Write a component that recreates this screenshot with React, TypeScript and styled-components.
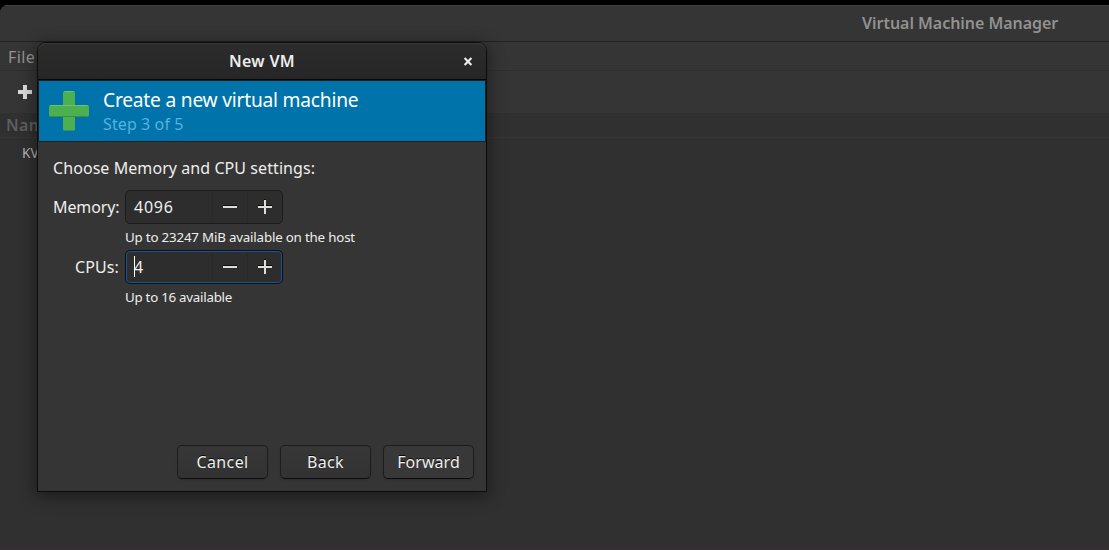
import React from "react";
import styled, { createGlobalStyle } from "styled-components";

const GlobalStyle = createGlobalStyle`
  * { box-sizing: border-box; }
  body {
    margin: 0;
    background: #000;
    overflow: hidden;
    font-family: "Noto Sans", "Open Sans", sans-serif;
    font-size: 16px;
    color: #eeeeec;
  }
`;

const Desktop = styled.div`
  position: relative;
  width: 1109px;
  height: 550px;
  padding-top: 5px;
  background: #000;
  overflow: hidden;
`;

const ManagerWindow = styled.div`
  display: flex;
  flex-direction: column;
  height: 545px;
  background: #303030;
  border-radius: 8px 0 0 0;
  border-bottom: 1px solid #372d32;
  overflow: hidden;
  color: #919190;
`;

const ManagerTitle = styled.div`
  height: 37px;
  padding-left: 862px;
  line-height: 36px;
  font-weight: 600;
  background: #353535;
  border-bottom: 1px solid #222;
  box-shadow: inset 0 1px #404040;
`;

const MenuBar = styled.div`
  height: 29px;
  padding-left: 8px;
  line-height: 31px;
  background: #353535;
  border-bottom: 1px solid #2f2f2f;
`;

const Toolbar = styled.div`
  height: 42px;
  padding: 14px 0 0 18px;
  background: #353535;
  svg { display: block; }
`;

const ListHeader = styled.div`
  height: 25px;
  padding-left: 6px;
  line-height: 24px;
  font-weight: 600;
  color: #5e5e5e;
  border-bottom: 1px solid #353535;
`;

const ListRow = styled.div`
  padding-left: 22px;
  line-height: 30px;
  font-size: 13.6px;
  color: #b4b4b3;
`;

const Dialog = styled.div`
  position: absolute;
  left: 37px;
  top: 42px;
  width: 450px;
  height: 450px;
  display: flex;
  flex-direction: column;
  background: #353535;
  border: 1px solid #0c0c0c;
  border-radius: 9px 9px 0 0;
  box-shadow: 0 3px 16px 2px rgba(0, 0, 0, 0.4);
`;

const DialogTitle = styled.div`
  display: grid;
  grid-template-columns: 36px 1fr 36px;
  align-items: center;
  height: 37px;
  font-weight: 600;
  text-align: center;
  background: linear-gradient(#2c2c2c, #262626);
  border-bottom: 1px solid #070707;
  border-radius: 8px 8px 0 0;
  box-shadow: inset 0 1px #383838;
  svg { display: block; margin-left: 13px; }
`;

const Banner = styled.div`
  display: flex;
  height: 62px;
  padding: 10px 0 0 10px;
  background: #0073aa;
  border: 1px solid #1f1f1f;
  svg { display: block; margin-right: 14px; }
`;

const BannerText = styled.div`
  margin-top: -4px;
`;

const Heading = styled.div`
  font-size: 19.2px;
  line-height: 25px;
  color: #fff;
`;

const Step = styled.div`
  line-height: 25px;
  color: #58b0e3;
`;

const Form = styled.div`
  display: flex;
  flex-direction: column;
  flex: 1;
  padding: 15px 12px 12px 15px;
`;

const Text = styled.span<{ $spacing?: number }>`
  letter-spacing: ${(p) => p.$spacing ?? 0}px;
  white-space: pre;
`;

const Prompt = styled.div`
  height: 33px;
  line-height: 22px;
`;

const Fields = styled.div`
  display: grid;
  grid-template-columns: 66px 1fr;
  grid-template-rows: 34px 26px 34px 26px;
  column-gap: 6px;
`;

const Label = styled.div`
  text-align: right;
  line-height: 34px;
  white-space: nowrap;
`;

const Hint = styled.div`
  grid-column: 2;
  font-size: 13.33px;
  line-height: 26px;
`;

const Spin = styled.div<{ $focused?: boolean }>`
  display: grid;
  grid-template-columns: 1fr 35px 35px;
  width: 158px;
  height: 34px;
  background: #2d2d2d;
  border: 1px solid ${(p) => (p.$focused ? "#0b0f17" : "#1c1c1c")};
  border-radius: 5px;
  box-shadow: ${(p) => (p.$focused ? "inset 0 0 0 1px #15539e" : "none")};
`;

const Value = styled.div`
  position: relative;
  padding-left: 8px;
  line-height: 32px;
`;

const Caret = styled.span`
  position: absolute;
  left: 8px;
  top: 5px;
  width: 1px;
  height: 21px;
  background: #fff;
`;

const SpinButton = styled.div`
  margin: 1px 0;
  padding: 7px 0 0 9px;
  border-left: 1px solid #292929;
  svg { display: block; }
`;

const Actions = styled.div`
  display: flex;
  justify-content: flex-end;
  gap: 12px;
  margin-top: auto;
`;

const Button = styled.div<{ $raised?: boolean }>`
  width: 91px;
  height: 34px;
  line-height: 33px;
  text-align: center;
  background: ${(p) => (p.$raised ? "#383838" : "linear-gradient(#373737, #323232)")};
  border: 1px solid #1d1d1d;
  border-bottom-color: #0c0c0c;
  border-radius: 5px;
  box-shadow: 0 1px 2px rgba(0, 0, 0, 0.12);
  text-shadow: 0 -1px rgba(0, 0, 0, 0.8);
`;

const Minus = () => (
  <svg width="16" height="16" shapeRendering="crispEdges">
    <path d="M1 6h14v1H1z" fill="#0e0e0e" />
    <path d="M1 7h14v2H1z" fill="#deddda" />
  </svg>
);

const Plus = () => (
  <svg width="16" height="16" shapeRendering="crispEdges">
    <path d="M1 6h14v1H1zM7 0h2v1H7z" fill="#0e0e0e" />
    <path d="M1 7h14v2H1zM7 1h2v14H7z" fill="#deddda" />
  </svg>
);

function SpinField({ value, focused }: { value: string; focused?: boolean }) {
  return (
    <Spin $focused={focused}>
      <Value>
        {focused && <Caret />}
        <Text $spacing={0.75}>{value}</Text>
      </Value>
      <SpinButton><Minus /></SpinButton>
      <SpinButton><Plus /></SpinButton>
    </Spin>
  );
}

export default function App() {
  return (
    <Desktop>
      <GlobalStyle />
      <ManagerWindow>
        <ManagerTitle><Text $spacing={-0.04}>Virtual Machine Manager</Text></ManagerTitle>
        <MenuBar><Text $spacing={0.4}>File</Text></MenuBar>
        <Toolbar>
          <svg width="14" height="14" shapeRendering="crispEdges">
            <path d="M5 0h4v5h5v4H9v5H5V9H0V5h5z" fill="#dadada" />
          </svg>
        </Toolbar>
        <ListHeader><Text $spacing={0.3}>Name</Text></ListHeader>
        <ListRow>KVM</ListRow>
      </ManagerWindow>
      <Dialog>
        <DialogTitle>
          <span />
          <Text $spacing={0.3}>New VM</Text>
          <svg width="10" height="9" viewBox="0 0 10 9">
            <path d="M1.6 1.1l6.8 6.8M8.4 1.1L1.6 7.9" stroke="#eeeeec" strokeWidth="2.1" />
          </svg>
        </DialogTitle>
        <Banner>
          <svg width="40" height="40">
            <rect x="14" y="0" width="12" height="40" rx="2" fill="#4caf50" />
            <path d="M15.5 .5h9" stroke="#6fbf73" />
            <path d="M15.5 39.5h9" stroke="#3e8f5b" />
            <rect x="0" y="14" width="40" height="12" rx="2" fill="#4caf50" />
            <path d="M1.5 14.5h37" stroke="#6fbf73" />
            <path d="M1.5 25.5h37" stroke="#3d8c40" />
          </svg>
          <BannerText>
            <Heading><Text $spacing={-0.22}>Create a new virtual machine</Text></Heading>
            <Step><Text $spacing={0.1}>Step 3 of 5</Text></Step>
          </BannerText>
        </Banner>
        <Form>
          <Prompt><Text $spacing={0.07}>Choose Memory and CPU settings:</Text></Prompt>
          <Fields>
            <Label><Text $spacing={-0.12}>Memory:</Text></Label>
            <SpinField value="4096" />
            <Hint><Text $spacing={-0.19}>Up to 23247 MiB available on the host</Text></Hint>
            <Label><Text $spacing={0.1}>CPUs:</Text></Label>
            <SpinField value="4" focused />
            <Hint><Text $spacing={-0.26}>Up to 16 available</Text></Hint>
          </Fields>
          <Actions>
            <Button><Text $spacing={0.4}>Cancel</Text></Button>
            <Button><Text $spacing={0.3}>Back</Text></Button>
            <Button $raised><Text $spacing={0.05}>Forward</Text></Button>
          </Actions>
        </Form>
      </Dialog>
    </Desktop>
  );
}
